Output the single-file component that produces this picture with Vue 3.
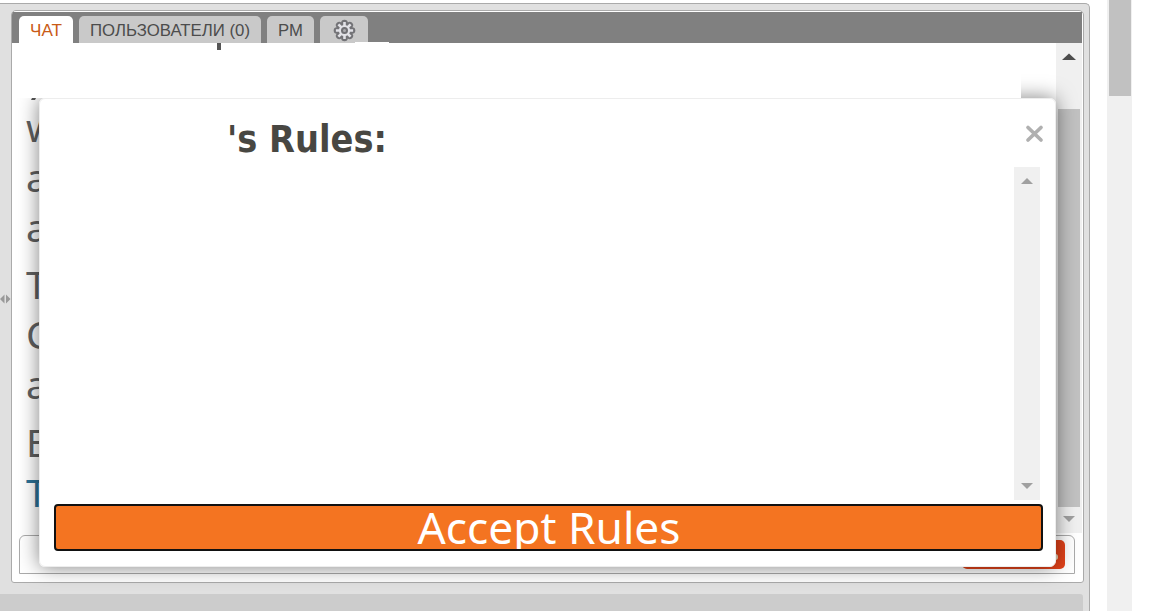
<script setup>
const lines = [
  { text: 'w', y: 142 },
  { text: 'a', y: 192 },
  { text: 'a', y: 242 },
  { text: 'T', y: 299 },
  { text: 'C', y: 349 },
  { text: 'a', y: 399 },
  { text: 'E', y: 457 },
  { text: 'T', y: 507, link: true }
]
const teeth = [0, 45, 90, 135, 180, 225, 270, 315]
</script>

<template>
  <div class="page">
    <div class="frame">
      <div class="gutter">
        <svg width="11" height="10" viewBox="0 0 11 10"><path d="M0 5L4.500 .5V9.500ZM10.500 5L6 .5V9.500Z" fill="#999" /></svg>
      </div>
      <div class="panel">
        <nav class="tabs">
          <div class="tab active"><svg width="54" height="27"><text x="11" y="19.5" textLength="32" lengthAdjust="spacingAndGlyphs">ЧАТ</text></svg></div>
          <div class="tab"><svg width="182" height="27"><text x="11" y="19.5" textLength="160" lengthAdjust="spacingAndGlyphs">ПОЛЬЗОВАТЕЛИ (0)</text></svg></div>
          <div class="tab"><svg width="47" height="27"><text x="11" y="19.5" textLength="25" lengthAdjust="spacingAndGlyphs">PM</text></svg></div>
          <div class="tab">
            <svg width="48" height="27" viewBox="0 0 48 27">
              <g transform="translate(24.5 14.5)">
                <g stroke="#737377" stroke-width="6.6" stroke-linecap="round">
                  <path v-for="t in teeth" :key="t" :transform="`rotate(${t})`" d="M0 -4V-7.5" />
                </g>
                <circle r="8.500" fill="#737377" />
                <g stroke="#e2e2e7" stroke-width="2.600">
                  <path v-for="t in teeth" :key="t" :transform="`rotate(${t})`" d="M0 -4V-8.600" />
                </g>
                <circle r="5.600" fill="#e2e2e7" />
                <circle r="2.500" fill="#aaaaae" stroke="#707074" stroke-width="2" />
              </g>
            </svg>
          </div>
        </nav>
        <div class="body">
          <div class="messages"></div>
          <div class="bar chat-bar">
            <svg width="26" height="28"><path d="M6 17L13 10.5L20 17Z" fill="#4c4c4c" /></svg>
            <div class="thumb"></div>
            <svg width="26" height="26"><path d="M7 9H19L13 15Z" fill="#a0a0a0" /></svg>
          </div>
        </div>
        <div class="composer"><div class="send"><i></i></div></div>
      </div>
      <div class="footer"></div>
    </div>
    <div class="bar page-bar"><div class="page-thumb"></div></div>

    <svg class="history" width="400" height="520">
      <rect x="355" y="42" width="34" height="2" fill="#fff" />
      <rect x="217" y="43" width="4" height="7" fill="#555" />
      <path d="M32 98H36L35 100H31Z" fill="#555" />
      <text v-for="(l, i) in lines" :key="i" x="26" :y="l.y" :class="{ link: l.link }">{{ l.text }}</text>
    </svg>
    <div class="shade"><div class="shadow-box"></div></div>
    <section class="modal">
      <header>
        <svg width="1015" height="68">
          <text class="title" x="187" y="53" textLength="160" lengthAdjust="spacingAndGlyphs">'s Rules:</text>
          <path d="M988 28.500L1001 41M1001 28.500L988 41" stroke="#b0b0b0" stroke-width="3.700" stroke-linecap="round" />
        </svg>
      </header>
      <div class="rules">
        <div class="bar rules-bar">
          <svg width="26" height="26"><path d="M7 17L13 11L19 17Z" fill="#a0a0a0" /></svg>
          <svg width="26" height="26"><path d="M7 9H19L13 15Z" fill="#a0a0a0" /></svg>
        </div>
      </div>
      <button class="accept">
        <svg width="985" height="43"><text x="361.500" y="38" textLength="263" lengthAdjust="spacingAndGlyphs">Accept Rules</text></svg>
      </button>
    </section>
  </div>
</template>

<style>
body { background: #fff; overflow: hidden; }
</style>
<style scoped>
* { box-sizing: border-box; }
svg { display: block; }
.page { position: relative; width: 1155px; height: 611px; overflow: hidden; display: flex; background: #fff; }
.frame { width: 1090px; height: 620px; margin-top: 3px; flex: none; background: #e0e0e0; border-top: 1px solid #aaa; border-right: 1px solid #aaa; border-radius: 0 5px 0 0; display: grid; grid-template-columns: 11px 1073px; grid-template-rows: 573px 50px; row-gap: 11px; padding-top: 6px; }
.gutter { display: flex; align-items: center; padding-top: 4px; }
.panel { border: 1px solid #aaa; border-radius: 5px 5px 3px 3px; background: #fff; overflow: hidden; padding: 1px; padding-left: 0; display: flex; flex-direction: column; }
.tabs { height: 31px; background: #808080; display: flex; align-items: flex-end; gap: 6px; padding-left: 7px; }
.tab { height: 27px; border-radius: 5px 5px 0 0; background: #c9c9c9; }
.tab text { font: 16px "Liberation Sans", Arial, sans-serif; fill: #4c4c4c; }
.tab.active { background: #fff; }
.tab.active text { fill: #c95b17; }
.body { height: 490px; display: flex; }
.messages { flex: 1; }
.bar { background: #f0f0f0; }
.chat-bar { width: 26px; display: flex; flex-direction: column; }
.thumb { width: 22px; height: 398px; margin: 38px 2px 0; background: #c1c1c1; }
.composer { margin: 2px 7px 0 7px; height: 39px; border: 1px solid #aaa; border-radius: 6px 6px 0 0; display: flex; justify-content: flex-end; padding: 4px 9px; }
.send { width: 103px; height: 29px; background: #e4431a; border-radius: 5px; padding: 14px 7px; display: flex; justify-content: flex-end; }
.send i { width: 5px; height: 6px; flex: none; border-radius: 50%; background: #ead5b8; }
.footer { grid-column: 1 / 3; width: 1083px; background: #ccc; border-radius: 0 3px 0 0; }
.page-bar { width: 25px; margin-left: 17px; padding-left: 2px; }
.page-thumb { width: 22px; height: 96px; background: #c1c1c1; }
.history { position: absolute; left: 0; top: 0; }
.history text { font: 39px "Noto Sans", sans-serif; fill: #606060; }
.history .link { fill: #2c7196; }
.shade { position: absolute; inset: 0; clip-path: polygon(0 98px, 1021px 98px, 1021px 70px, 1155px 70px, 1155px 611px, 0 611px); }
.shadow-box { margin: 98px 0 0 39px; width: 1017px; height: 469px; border-radius: 6px; box-shadow: 0 0 20px rgba(0, 0, 0, .5); }
.modal { position: absolute; left: 39px; top: 98px; width: 1017px; height: 469px; background: #fff; border: 1px solid #ededed; border-radius: 6px; }
header { height: 68px; }
.title { font: bold 37px "DejaVu Sans", sans-serif; fill: #484742; }
.rules { height: 333px; display: flex; justify-content: flex-end; padding-right: 15px; }
.rules-bar { display: flex; flex-direction: column; justify-content: space-between; }
.accept { display: block; width: 989px; height: 47px; margin: 4px 0 0 14px; padding: 0; border: 2px solid #111; border-radius: 4px; background: #f47421; overflow: hidden; }
.accept text { font: 43.5px "Noto Sans", sans-serif; fill: #fff; }
</style>
